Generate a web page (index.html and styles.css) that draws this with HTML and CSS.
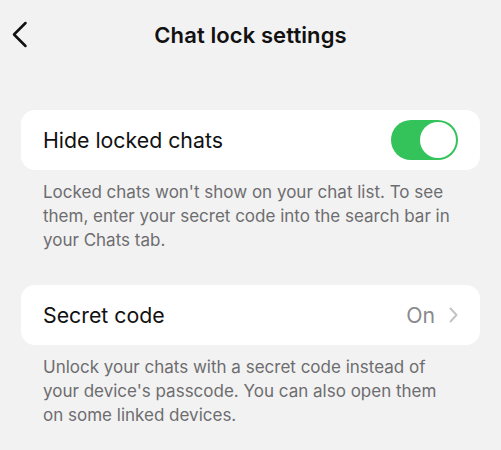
FILE: index.html
```html
<!DOCTYPE html>
<html lang="en">
<head>
   <meta charset="UTF-8">
   <meta name="viewport" content="width=device-width, initial-scale=1.0">
   <title>Chat lock settings</title>
   <link rel="stylesheet" href="styles.css">
</head>
<body>
   <header class="nav-bar">
       <button class="back-btn" aria-label="Back">
           <svg width="17" height="27" viewBox="0 0 17 27">
               <path d="M14.5 2 L3 13.5 L14.5 25" fill="none" stroke="#111" stroke-width="2.5" stroke-linecap="round" stroke-linejoin="round"/>
           </svg>
       </button>
       <h1 class="nav-title">Chat lock settings</h1>
   </header>

   <main class="settings">
       <section class="group">
           <div class="cell">
               <span class="cell-label">Hide locked chats</span>
               <span class="switch is-on"><span class="knob"></span></span>
           </div>
           <p class="note">Locked chats won't show on your chat list. To see them, enter your secret code into the search bar in your Chats tab.</p>
       </section>

       <section class="group">
           <div class="cell">
               <span class="cell-label">Secret code</span>
               <span class="cell-value">
                   On
                   <svg width="9" height="16" viewBox="0 0 9 16">
                       <path d="M1.5 1.5 L7.5 8 L1.5 14.5" fill="none" stroke="#c4c4c7" stroke-width="2" stroke-linecap="round" stroke-linejoin="round"/>
                   </svg>
               </span>
           </div>
           <p class="note">Unlock your chats with a secret code instead of your device's passcode. You can also open them on some linked devices.</p>
       </section>
   </main>
</body>
</html>
```

FILE: styles.css
```css
body {
    margin: 0;
    background: #f2f2f2;
    font-family: 'Inter', 'Liberation Sans', sans-serif;
    color: #111;
}

/* top bar */
.nav-bar {
    position: relative;
    height: 70px;
    display: flex;
    align-items: center;
    justify-content: center;
}

.back-btn {
    position: absolute;
    left: 11px;
    top: 21px;
    padding: 0;
    border: none;
    background: none;
    display: flex;
}

.nav-title {
    margin: 0;
    font-size: 22px;
    font-weight: 600;
    letter-spacing: 0.1px;
}

.settings {
    padding: 40px 21px 0;
}

.group {
    margin-bottom: 33px;
}

.cell {
    height: 60px;
    background: #fff;
    border-radius: 14px;
    padding: 0 22px;
    display: flex;
    align-items: center;
    justify-content: space-between;
}

.cell-label {
    font-size: 21.3px;
}

.cell-value {
    display: flex;
    align-items: center;
    gap: 14px;
    font-size: 21.3px;
    color: #8a8a8e;
}

/* toggle */
.switch {
    width: 67px;
    height: 40px;
    border-radius: 20px;
    background: #c8c8cc;
    display: flex;
    align-items: center;
    padding: 2px;
    box-sizing: border-box;
}

.switch.is-on {
    background: #34c35a;
    justify-content: flex-end;
}

.knob {
    width: 36px;
    height: 36px;
    border-radius: 50%;
    background: #fff;
}

.note {
    margin: 10px 0 0;
    padding: 0 22px;
    font-size: 17px;
    line-height: 24px;
    color: #6d6d70;
}
```
